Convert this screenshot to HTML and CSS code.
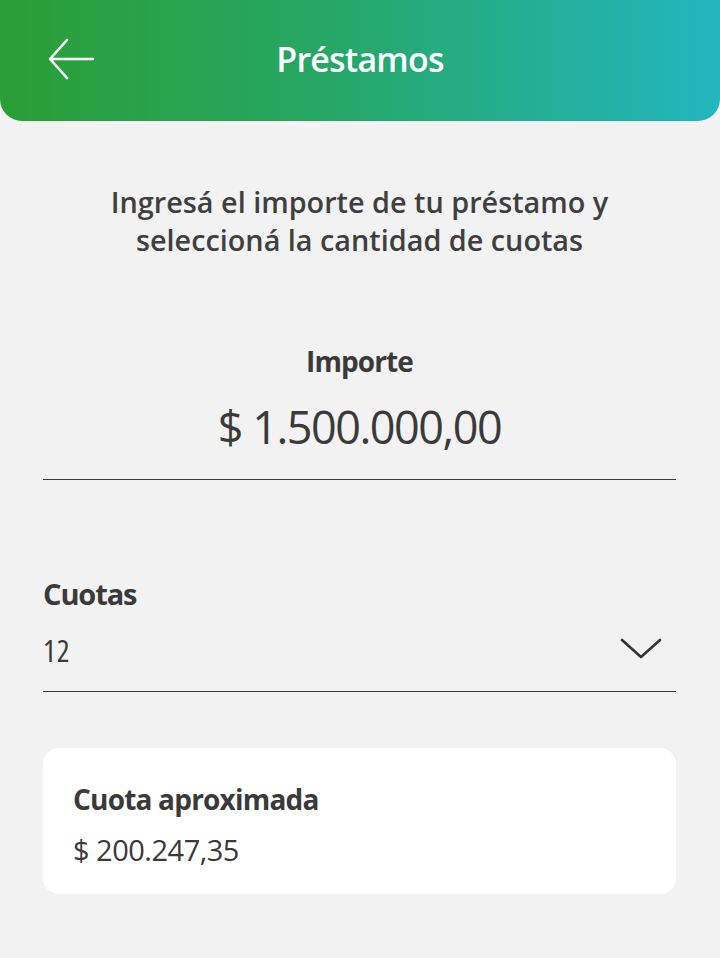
FILE: index.html
```html
<!DOCTYPE html>
<html lang="es">
<head>
<meta charset="utf-8">
<title>Préstamos</title>
<link rel="stylesheet" href="styles.css">
</head>
<body>
<header class="topbar">
  <button class="back" aria-label="Volver">
    <svg width="48" height="44" viewBox="0 0 48 44" fill="none" stroke="#fff" stroke-width="2.6" stroke-linecap="round" stroke-linejoin="round">
      <path d="M46 22H4M20 3L3 22l17 19"/>
    </svg>
  </button>
  <h1 class="title">Préstamos</h1>
</header>
<main class="content">
  <p class="intro">Ingresá el importe de tu préstamo y<br>seleccioná la cantidad de cuotas</p>
  <section class="amount">
    <div class="amount-label">Importe</div>
    <div class="amount-value">$ 1.500.000,00</div>
  </section>
  <section class="select">
    <div class="select-label">Cuotas</div>
    <div class="select-row">
      <span class="select-value">12</span>
      <svg class="chev" width="42" height="24" viewBox="0 0 42 24" fill="none" stroke="#333" stroke-width="2.6" stroke-linecap="round" stroke-linejoin="round">
        <path d="M2 4l19 17L40 4"/>
      </svg>
    </div>
  </section>
  <section class="card">
    <div class="card-title">Cuota aproximada</div>
    <div class="card-value">$ 200.247,35</div>
  </section>
</main>
</body>
</html>
```
FILE: styles.css
```css
* { box-sizing: border-box; }
html, body { margin: 0; padding: 0; }
body {
  background: #f2f2f2;
  font-family: "Open Sans", "Noto Sans", sans-serif;
  color: #3a3a3a;
  width: 720px;
  min-height: 958px;
}
.topbar {
  height: 121px;
  background: linear-gradient(90deg, #2a9e35 0%, #26a765 45%, #22b6bf 100%);
  border-radius: 0 0 22px 22px;
  display: flex;
  align-items: center;
  position: relative;
  padding-left: 47px;
}
.back {
  background: none;
  border: 0;
  padding: 0;
  display: flex;
  margin-top: -4px;
}
.title {
  position: absolute;
  left: 0; right: 0;
  top: 0; bottom: 0;
  margin: 0;
  display: flex;
  align-items: center;
  justify-content: center;
  color: #fff;
  font-size: 34px;
  font-weight: 600;
  letter-spacing: -0.8px;
  padding-bottom: 4px;
  pointer-events: none;
}
.content {
  padding: 0 44px 0 43px;
}
.intro {
  margin: 62px 0 0;
  text-align: center;
  font-size: 28.8px;
  line-height: 38px;
  font-weight: 600;
  color: #3f3f3f;
}
.amount {
  margin-top: 84px;
  text-align: center;
  border-bottom: 1.3px solid #3a3a3a;
  padding-bottom: 24px;
}
.amount-label {
  font-size: 28px;
  font-weight: 700;
  line-height: 36px;
  letter-spacing: -0.9px;
}
.amount-value {
  font-size: 45px;
  font-weight: 400;
  line-height: 56px;
  margin-top: 20px;
  letter-spacing: -1.5px;
}
.select {
  margin-top: 96px;
  border-bottom: 1.3px solid #3a3a3a;
  padding-bottom: 22px;
}
.select-label {
  font-size: 29px;
  font-weight: 700;
  line-height: 36px;
  letter-spacing: -1.1px;
}
.select-row {
  display: flex;
  justify-content: space-between;
  align-items: center;
  margin-top: 21px;
  padding-right: 14px;
}
.select-value {
  font-size: 30px;
  line-height: 36px;
  font-stretch: 75%;
  letter-spacing: 1px;
}
.chev { margin-top: -6px; }
.card {
  margin-top: 56px;
  background: #fff;
  border-radius: 16px;
  padding: 33px 30px 0;
  height: 146px;
}
.card-title {
  font-size: 28px;
  font-weight: 700;
  line-height: 36px;
  letter-spacing: -0.8px;
}
.card-value {
  font-size: 29px;
  line-height: 36px;
  margin-top: 15px;
  letter-spacing: -0.5px;
}
```
